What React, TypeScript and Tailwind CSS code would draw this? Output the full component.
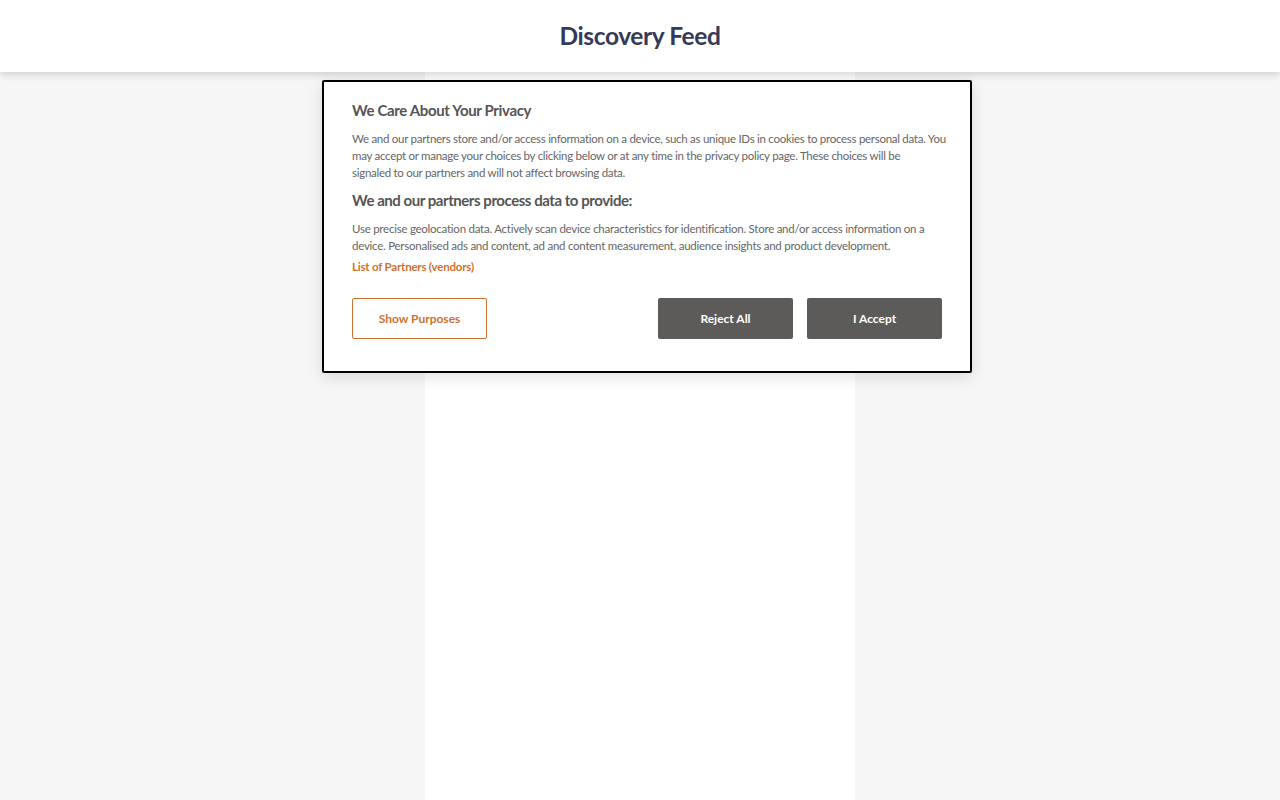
export default function App() {
  return (
    <div className="relative min-h-[800px] bg-[#f6f6f6] font-['Lato','Noto_Sans',sans-serif]">
      {/* Header */}
      <header className="relative z-10 h-[72px] bg-white flex items-center justify-center shadow-[0_2px_8px_rgba(0,0,0,0.18)]">
        <h1 className="text-[24.5px] font-bold text-[#363a59] tracking-[-0.4px]">Discovery Feed</h1>
      </header>

      {/* Feed column */}
      <main className="mx-auto w-[430px] h-[728px] bg-white" />

      {/* Consent dialog */}
      <div className="absolute left-[322px] top-[80px] w-[650px] bg-white border-2 border-black rounded-[2px] shadow-[0_4px_16px_rgba(0,0,0,0.12)] px-[28px] pt-[18px] pb-[32px] text-[#666]">
        <h2 className="text-[15px] font-bold text-[#555] leading-[20px] tracking-[-0.35px]">We Care About Your Privacy</h2>
        <p className="mt-[10px] mr-[-6px] text-[11.5px] leading-[17px] tracking-[-0.28px]">
          We and our partners store and/or access information on a device, such as unique IDs in cookies to process personal data. You may accept or manage your choices by clicking below or at any time in the privacy policy page. These choices will be
          <br />
          signaled to our partners and will not affect browsing data.
        </p>
        <h3 className="mt-[9px] text-[15px] font-bold text-[#555] leading-[20px] tracking-[-0.45px]">We and our partners process data to provide:</h3>
        <p className="mt-[10px] text-[11.5px] leading-[17px] tracking-[-0.25px]">
          Use precise geolocation data. Actively scan device characteristics for identification. Store and/or access information on a device. Personalised ads and content, ad and content measurement, audience insights and product development.
        </p>
        <a className="block mt-[4px] text-[11.5px] leading-[17px] font-bold text-[#d0722e] tracking-[-0.2px]">List of Partners (vendors)</a>

        <div className="mt-[23px] flex items-center">
          <button className="w-[135px] h-[41px] border border-[#d0722e] rounded-[2px] text-[12px] font-bold text-[#d0722e] bg-white">Show Purposes</button>
          <div className="ml-auto flex gap-[14px]">
            <button className="w-[135px] h-[41px] rounded-[2px] bg-[#5c5b59] text-[12px] font-bold text-white">Reject All</button>
            <button className="w-[135px] h-[41px] rounded-[2px] bg-[#5c5b59] text-[12px] font-bold text-white">I Accept</button>
          </div>
        </div>
      </div>
    </div>
  );
}
